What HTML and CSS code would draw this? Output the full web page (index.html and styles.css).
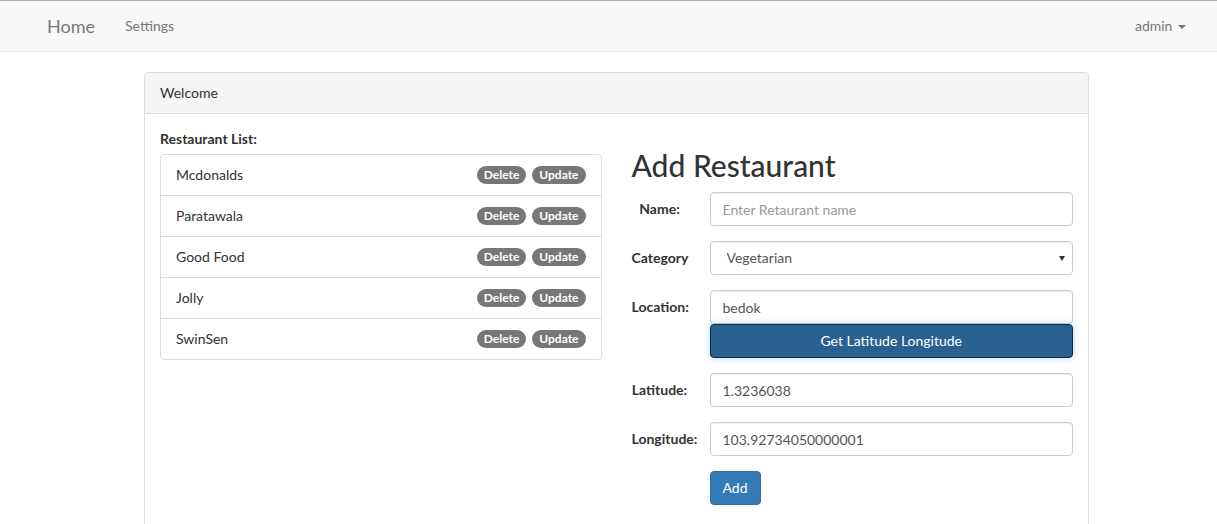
FILE: index.html
```html
<!DOCTYPE html>
<html>
<head>
<meta charset="utf-8">
<link rel="stylesheet" href="styles.css">
</head>
<body>
<nav class="navbar">
  <div class="nav-left">
    <a class="brand">Home</a>
    <a class="nav-link">Settings</a>
  </div>
  <div class="nav-right">
    <a class="nav-link">admin <span class="caret"></span></a>
  </div>
</nav>
<div class="container">
  <div class="panel">
    <div class="panel-heading">Welcome</div>
    <div class="panel-body">
      <div class="row">
        <div class="col">
          <label class="list-label">Restaurant List:</label>
          <ul class="list-group">
            <li class="list-item"><span>Mcdonalds</span><span class="badges"><span class="badge">Delete</span><span class="badge">Update</span></span></li>
            <li class="list-item"><span>Paratawala</span><span class="badges"><span class="badge">Delete</span><span class="badge">Update</span></span></li>
            <li class="list-item"><span>Good Food</span><span class="badges"><span class="badge">Delete</span><span class="badge">Update</span></span></li>
            <li class="list-item"><span>Jolly</span><span class="badges"><span class="badge">Delete</span><span class="badge">Update</span></span></li>
            <li class="list-item"><span>SwinSen</span><span class="badges"><span class="badge">Delete</span><span class="badge">Update</span></span></li>
          </ul>
        </div>
        <div class="col">
          <h2 class="title">Add Restaurant</h2>
          <div class="form-group">
            <label class="control-label">Name:</label>
            <div class="field"><input class="form-control" type="text" placeholder="Enter Retaurant name"></div>
          </div>
          <div class="form-group">
            <label class="control-label">Category</label>
            <div class="field select-wrap">
              <select class="form-control select"><option>Vegetarian</option></select>
            </div>
          </div>
          <div class="form-group">
            <label class="control-label">Location:</label>
            <div class="field">
              <input class="form-control" type="text" value="bedok">
              <button class="btn btn-geo">Get Latitude Longitude</button>
            </div>
          </div>
          <div class="form-group">
            <label class="control-label">Latitude:</label>
            <div class="field"><input class="form-control" type="text" value="1.3236038"></div>
          </div>
          <div class="form-group">
            <label class="control-label">Longitude:</label>
            <div class="field"><input class="form-control" type="text" value="103.92734050000001"></div>
          </div>
          <div class="form-group">
            <span class="control-label"></span>
            <div class="field"><button class="btn btn-primary">Add</button></div>
          </div>
        </div>
      </div>
    </div>
  </div>
</div>
</body>
</html>
```
FILE: styles.css
```css
* { box-sizing: border-box; }
html, body { margin: 0; padding: 0; }
body {
  font-family: Lato, "Helvetica Neue", Arial, sans-serif;
  font-size: 14px;
  line-height: 1.42857;
  color: #333;
  background: #fff;
  overflow: hidden;
}
a { text-decoration: none; }

.navbar {
  height: 52px;
  background: #f8f8f8;
  border-top: 1px solid #adadad;
  border-bottom: 1px solid #e7e7e7;
  display: flex;
  justify-content: space-between;
  align-items: center;
  padding: 0 31px 0 47px;
}
.nav-left { display: flex; align-items: center; }
.brand {
  font-size: 18px;
  color: #777;
  margin-right: 30px;
  line-height: 20px;
}
.nav-link {
  font-size: 14px;
  color: #777;
  line-height: 20px;
}
.caret {
  display: inline-block;
  width: 0;
  height: 0;
  margin-left: 2px;
  vertical-align: middle;
  border-top: 4px solid #777;
  border-left: 4px solid transparent;
  border-right: 4px solid transparent;
}

.container {
  width: 945px;
  margin: 20px 0 0 144px;
}
.panel {
  border: 1px solid #ddd;
  border-radius: 4px;
  height: 500px;
}
.panel-heading {
  background: #f5f5f5;
  border-bottom: 1px solid #ddd;
  border-radius: 3px 3px 0 0;
  padding: 10px 15px;
  height: 41px;
  color: #333;
}
.panel-body { padding: 15px; }
.row { display: flex; margin: 0 -15px; }
.col { width: 50%; padding: 0 15px; }

.list-label {
  display: block;
  font-weight: bold;
  margin-bottom: 5px;
  line-height: 20px;
}
.list-group {
  list-style: none;
  margin: 0;
  padding: 0;
  border: 1px solid #ddd;
  border-radius: 4px;
}
.list-item {
  display: flex;
  justify-content: space-between;
  align-items: center;
  padding: 10px 15px;
  height: 41px;
  border-top: 1px solid #ddd;
}
.list-item:first-child { border-top: none; height: 40px; }
.badges { display: flex; gap: 6px; }
.badge {
  display: inline-block;
  background: #777;
  color: #fff;
  font-size: 12px;
  font-weight: bold;
  line-height: 1;
  padding: 3px 7px;
  border-radius: 10px;
}

.title {
  font-size: 30px;
  font-weight: 500;
  line-height: 1.1;
  margin: 20px 0 10px;
  color: #333;
}
.form-group { display: flex; margin-bottom: 15px; }
.control-label {
  width: 56px;
  flex: none;
  text-align: center;
  font-weight: bold;
  padding-top: 7px;
  white-space: nowrap;
  margin-right: 22px;
}
.field { flex: 1; position: relative; }
.form-control {
  display: block;
  width: 100%;
  height: 34px;
  padding: 6px 12px;
  font-family: inherit;
  font-size: 14px;
  line-height: 1.42857;
  color: #555;
  background: #fff;
  border: 1px solid #ccc;
  border-radius: 4px;
  box-shadow: inset 0 1px 1px rgba(0,0,0,.075);
  outline: none;
}
.form-control::placeholder { color: #999; }
.select {
  -webkit-appearance: none;
  appearance: none;
  padding-left: 16px;
}
.select-wrap::after {
  content: "";
  position: absolute;
  right: 8px;
  top: 15px;
  border-top: 5px solid #333;
  border-left: 3px solid transparent;
  border-right: 3px solid transparent;
}

.btn {
  display: inline-block;
  font-family: inherit;
  font-size: 14px;
  line-height: 1.42857;
  padding: 6px 12px;
  border-radius: 4px;
  border: 1px solid transparent;
  color: #fff;
  cursor: pointer;
  height: 34px;
}
.btn-geo {
  display: block;
  width: 100%;
  background: #286090;
  border-color: #122b40;
  box-shadow: 0 0 6px rgba(102,175,233,.5);
}
.btn-primary {
  background: #337ab7;
  border-color: #2e6da4;
}
```
